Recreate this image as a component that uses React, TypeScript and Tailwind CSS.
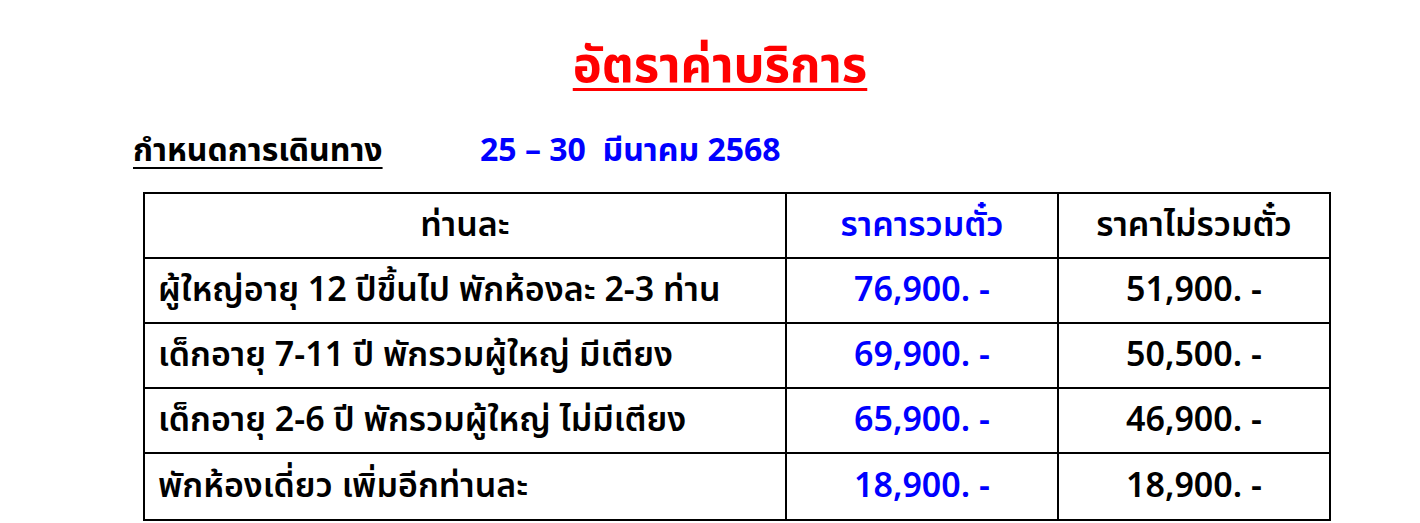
import React from 'react'

const rows = [
  { label: 'ผู้ใหญ่อายุ 12 ปีขึ้นไป พักห้องละ 2-3 ท่าน', withTicket: '76,900. -', noTicket: '51,900. -' },
  { label: 'เด็กอายุ 7-11 ปี พักรวมผู้ใหญ่ มีเตียง', withTicket: '69,900. -', noTicket: '50,500. -' },
  { label: 'เด็กอายุ 2-6 ปี พักรวมผู้ใหญ่ ไม่มีเตียง', withTicket: '65,900. -', noTicket: '46,900. -' },
  { label: 'พักห้องเดี่ยว เพิ่มอีกท่านละ', withTicket: '18,900. -', noTicket: '18,900. -' },
]

export default function App() {
  return (
    <div className="w-[1420px] h-[523px] bg-white overflow-hidden font-['Tahoma','Noto_Sans_Thai','Noto_Sans','DejaVu_Sans',sans-serif] text-black">
      <div className="pt-[37px] pl-[20px] text-center">
        <span className="text-[49px] leading-[60px] font-bold text-[#ff0000] underline decoration-[3px] underline-offset-[6px]">
          อัตราค่าบริการ
        </span>
      </div>

      <div className="flex items-center mt-[30px] pl-[133px] h-[48px] text-[32px] font-bold">
        <span className="underline decoration-2 underline-offset-[6px] w-[347px]">กำหนดการเดินทาง</span>
        <span className="text-[#0000ff] whitespace-pre">25 – 30  มีนาคม 2568</span>
      </div>

      <div className="ml-[143px] mt-[17px] w-[1188px] border-2 border-black text-[34px] font-semibold">
        <div className="grid grid-cols-[642px_272px_1fr] h-[65px] border-b-2 border-black">
          <div className="flex items-center justify-center border-r-2 border-black">ท่านละ</div>
          <div className="flex items-center justify-center border-r-2 border-black text-[#0000ff]">ราคารวมตั๋ว</div>
          <div className="flex items-center justify-center">ราคาไม่รวมตั๋ว</div>
        </div>
        {rows.map((r, i) => (
          <div
            key={i}
            className={`grid grid-cols-[642px_272px_1fr] h-[65px] ${i < rows.length - 1 ? 'border-b-2 border-black' : ''}`}
          >
            <div className="flex items-center pl-[13px] border-r-2 border-black">{r.label}</div>
            <div className="flex items-center justify-center border-r-2 border-black text-[#0000ff]">{r.withTicket}</div>
            <div className="flex items-center justify-center">{r.noTicket}</div>
          </div>
        ))}
      </div>
    </div>
  )
}
